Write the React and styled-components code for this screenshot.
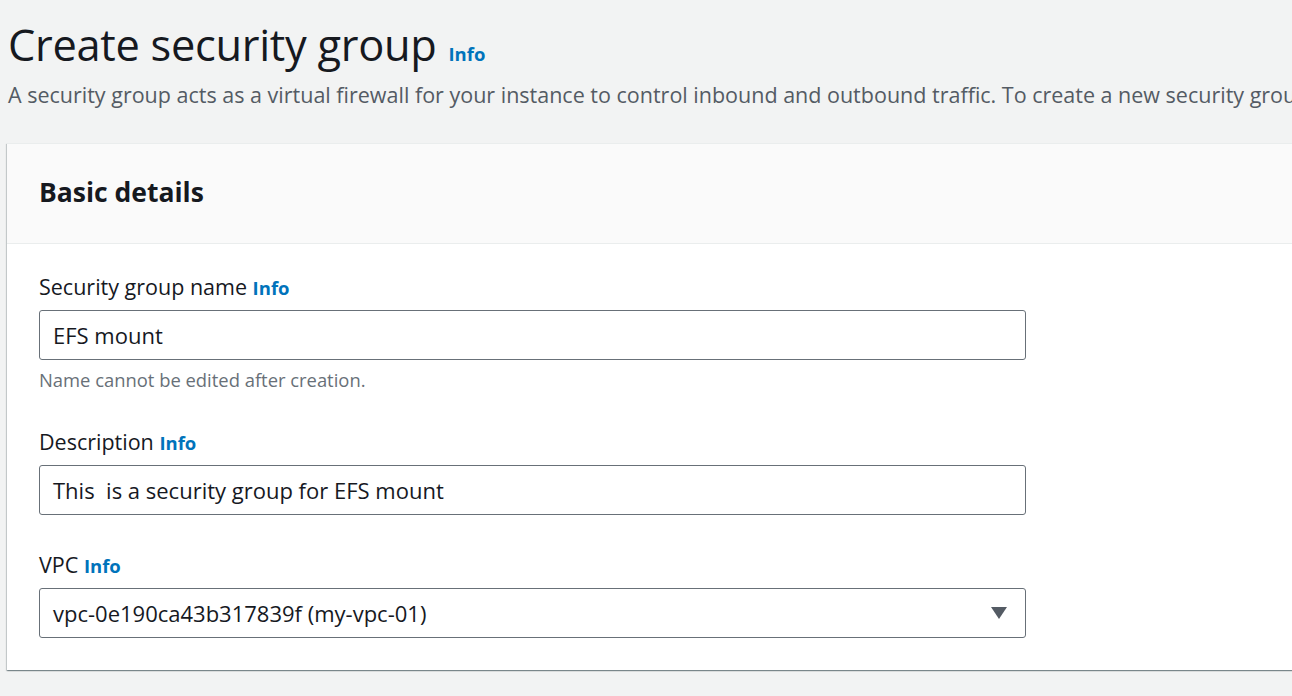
import React from 'react';
import styled, { createGlobalStyle } from 'styled-components';

const GlobalStyle = createGlobalStyle`
  html, body {
    margin: 0;
    padding: 0;
    background: #f2f3f3;
    font-family: "Open Sans", "Noto Sans", sans-serif;
    color: #16191f;
    overflow: hidden;
  }
`;

const Page = styled.div`
  width: 1292px;
  height: 696px;
  overflow: hidden;
  padding: 19px 0 0 8px;
  box-sizing: border-box;
`;

const TitleRow = styled.div`
  display: flex;
  align-items: baseline;
  gap: 12px;
`;

const Title = styled.h1`
  margin: 0;
  font-size: 43.4px;
  line-height: 52px;
  font-weight: 400;
  color: #16191f;
  letter-spacing: -0.3px;
`;

const InfoLink = styled.a`
  font-weight: 700;
  font-size: 18.5px;
  color: #0073bb;
  text-decoration: none;
  cursor: pointer;
`;

const Lead = styled.p`
  margin: 9px 0 0;
  font-size: 21.5px;
  line-height: 30px;
  color: #545b64;
  white-space: nowrap;
`;

const Card = styled.section`
  margin: 33px 0 0 -1px;
  width: 1400px;
  background: #fff;
  box-shadow: 0 1px 1px 0 rgba(0, 28, 36, 0.3), 1px 1px 1px 0 rgba(0, 28, 36, 0.15),
    -1px 1px 1px 0 rgba(0, 28, 36, 0.15);
  border-top: 1px solid #eaeded;
`;

const CardHeader = styled.header`
  height: 99px;
  display: flex;
  align-items: center;
  padding-left: 32px;
  background: #fafafa;
  border-bottom: 1px solid #eaeded;
`;

const CardTitle = styled.h2`
  margin: 0 0 3px;
  font-size: 26.5px;
  font-weight: 700;
  color: #16191f;
`;

const CardBody = styled.div`
  padding: 29px 0 32px 32px;
  display: flex;
  flex-direction: column;
  gap: 36px;
`;

const Field = styled.div`
  display: flex;
  flex-direction: column;
`;

const Label = styled.label`
  font-size: 21.5px;
  line-height: 28px;
  color: #16191f;
  margin-bottom: 8px;
`;

const InputBox = styled.div`
  width: 987px;
  height: 50px;
  box-sizing: border-box;
  border: 1px solid #687078;
  border-radius: 3px;
  background: #fff;
  display: flex;
  align-items: center;
  justify-content: space-between;
  padding: 0 18px 0 13px;
  font-size: 22px;
  color: #16191f;
  white-space: pre;
`;

const Hint = styled.div`
  margin-top: 8px;
  font-size: 18.4px;
  line-height: 24px;
  color: #687078;
`;

const Caret = styled.span`
  width: 0;
  height: 0;
  border-left: 8px solid transparent;
  border-right: 8px solid transparent;
  border-top: 12px solid #545b64;
`;

export default function App() {
  return (
    <>
      <GlobalStyle />
      <Page>
        <TitleRow>
          <Title>Create security group</Title>
          <InfoLink>Info</InfoLink>
        </TitleRow>
        <Lead>
          A security group acts as a virtual firewall for your instance to control inbound and outbound traffic. To create a new security group, complete the fields below.
        </Lead>
        <Card>
          <CardHeader>
            <CardTitle>Basic details</CardTitle>
          </CardHeader>
          <CardBody>
            <Field>
              <Label>
                Security group name <InfoLink>Info</InfoLink>
              </Label>
              <InputBox>EFS mount</InputBox>
              <Hint>Name cannot be edited after creation.</Hint>
            </Field>
            <Field>
              <Label>
                Description <InfoLink>Info</InfoLink>
              </Label>
              <InputBox>This  is a security group for EFS mount</InputBox>
            </Field>
            <Field>
              <Label>
                VPC <InfoLink>Info</InfoLink>
              </Label>
              <InputBox>
                vpc-0e190ca43b317839f (my-vpc-01)
                <Caret />
              </InputBox>
            </Field>
          </CardBody>
        </Card>
      </Page>
    </>
  );
}
